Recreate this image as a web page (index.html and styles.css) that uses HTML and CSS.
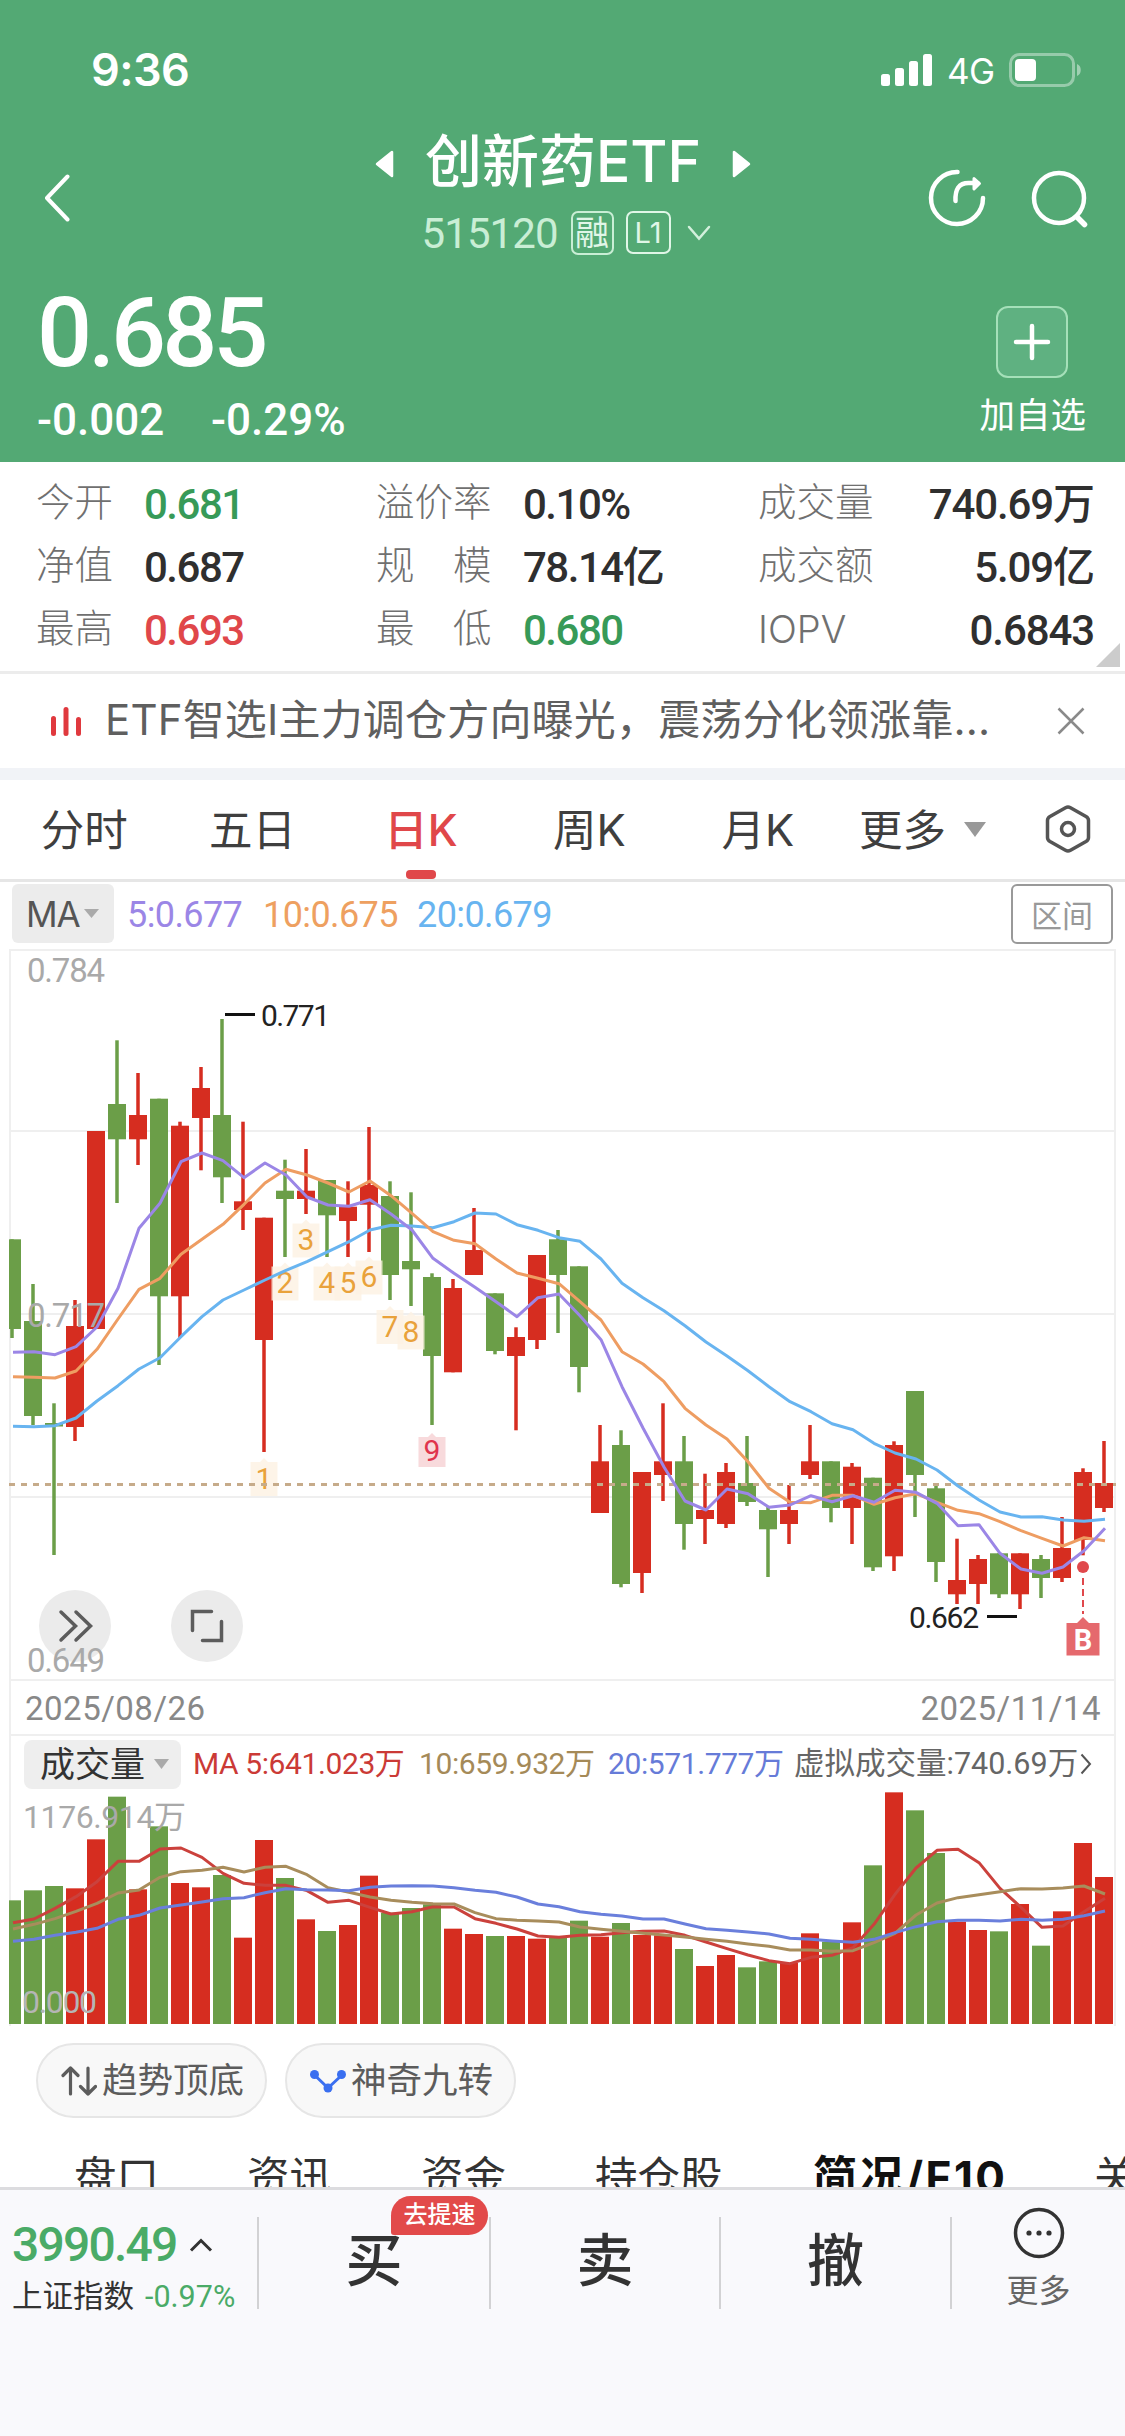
FILE: index.html
```html
<!DOCTYPE html>
<html lang="zh-CN">
<head>
<meta charset="utf-8">
<title>创新药ETF 515120</title>
<link rel="stylesheet" href="styles.css">
</head>
<body>
<div class="app">
  <header class="header">
    <div class="status">
      <span class="clock">9:36</span>
      <div class="status-right">
        <svg class="signal" width="52" height="34" viewBox="0 0 52 34" fill="#fff"><rect x="0" y="21" width="9" height="12" rx="2.5"/><rect x="14" y="15" width="9" height="18" rx="2.5"/><rect x="28" y="8" width="9" height="25" rx="2.5"/><rect x="42" y="1" width="9" height="32" rx="2.5"/></svg>
        <span class="net">4G</span>
        <svg width="74" height="34" viewBox="0 0 74 34"><rect x="1.5" y="1.5" width="63" height="31" rx="9" fill="none" stroke="#fff" stroke-opacity=".4" stroke-width="3"/><rect x="6" y="6" width="21" height="22" rx="4" fill="#fff"/><path d="M68 11c5 1.500 5 10.500 0 12z" fill="#fff" fill-opacity=".45"/></svg>
      </div>
    </div>
    <div class="nav">
      <svg class="back" width="26" height="48" viewBox="0 0 26 48"><path d="M23.500 2.500L3 24l20.500 21.500" fill="none" stroke="#fff" stroke-width="4" stroke-linecap="round" stroke-linejoin="round"/></svg>
      <div class="nav-title">
        <div class="name-row">
          <svg width="19" height="28" viewBox="0 0 19 28"><path d="M17 2v24L2 14z" fill="#fff" stroke="#fff" stroke-width="2.500" stroke-linejoin="round"/></svg>
          <h1>创新药ETF</h1>
          <svg width="19" height="28" viewBox="0 0 19 28"><path d="M2 2v24l15-12z" fill="#fff" stroke="#fff" stroke-width="2.500" stroke-linejoin="round"/></svg>
        </div>
        <div class="code-row">
          <span class="code num">515120</span>
          <span class="tag">融</span>
          <span class="tag tag-l1">L1</span>
          <svg class="code-arrow" width="24" height="16" viewBox="0 0 24 16"><path d="M2 2l10 11.500L22 2" fill="none" stroke="#d3f0dc" stroke-width="2.500" stroke-linecap="round"/></svg>
        </div>
      </div>
      <div class="nav-icons">
        <svg width="60" height="60" viewBox="0 0 60 60" fill="none" stroke="#fff" stroke-width="4.500" stroke-linecap="round" stroke-linejoin="round"><path d="M30.500 4A26 26 0 1 0 56 30"/><path d="M28.500 33c-.5-12 3.500-18 13-18h9"/><path d="M47 10.500l5.500 5L47 21z" fill="#fff" stroke-width="3"/></svg>
        <svg width="60" height="60" viewBox="0 0 60 60" fill="none" stroke="#fff" stroke-width="4.500" stroke-linecap="round"><circle cx="30" cy="30" r="25"/><path d="M48 49l7.500 7.500" stroke-width="5.500"/></svg>
      </div>
    </div>
    <div class="quote">
      <div class="quote-left">
        <div class="price num">0.685</div>
        <div class="change num"><span>-0.002</span><span>-0.29%</span></div>
      </div>
      <div class="watch">
        <div class="watch-box"><svg width="40" height="40" viewBox="0 0 40 40" stroke="#fff" stroke-width="4.500" stroke-linecap="round"><path d="M20 4v32M4 20h32"/></svg></div>
        <span>加自选</span>
      </div>
    </div>
  </header>

  <section class="stats">
    <span class="label">今开</span><span class="value num down">0.681</span>
    <span class="label">溢价率</span><span class="value num">0.10%</span>
    <span class="label">成交量</span><span class="value num end">740.69万</span>
    <span class="label">净值</span><span class="value num">0.687</span>
    <span class="label">规　模</span><span class="value num">78.14亿</span>
    <span class="label">成交额</span><span class="value num end">5.09亿</span>
    <span class="label">最高</span><span class="value num up">0.693</span>
    <span class="label">最　低</span><span class="value num down">0.680</span>
    <span class="label iopv">IOPV</span><span class="value num end">0.6843</span>
    <i class="corner"></i>
  </section>

  <section class="banner">
    <svg width="33" height="32" viewBox="0 0 33 32" fill="#e0393e"><rect x="1" y="11" width="5" height="20" rx="2.500"/><rect x="13.500" y="2" width="5" height="29" rx="2.500"/><rect x="26" y="12" width="5" height="19" rx="2.500"/></svg>
    <p>ETF智选I主力调仓方向曝光，震荡分化领涨靠...</p>
    <svg width="28" height="28" viewBox="0 0 28 28"><path d="M1.500 1.500l25 25M26.500 1.500l-25 25" stroke="#8a8a8a" stroke-width="2.500"/></svg>
  </section>

  <nav class="periods">
    <span class="period">分时</span>
    <span class="period">五日</span>
    <span class="period active">日K</span>
    <span class="period">周K</span>
    <span class="period">月K</span>
    <span class="period-more">更多<svg width="22" height="15" viewBox="0 0 22 15"><path d="M0 0h22L11 15z" fill="#999"/></svg></span>
    <svg class="gear" width="46" height="48" viewBox="0 0 46 48" fill="none" stroke="#555" stroke-width="3.500" stroke-linejoin="round"><path d="M20.500 2.700q2.500-1.400 5 0L41 11.500q2.500 1.500 2.500 4V32.500q0 2.500-2.500 4L25.500 45.300q-2.500 1.400-5 0L5 36.500q-2.500-1.500-2.500-4V15.500q0-2.500 2.500-4z"/><circle cx="23" cy="24" r="6.500"/></svg>
  </nav>

  <section class="ma-row">
    <span class="ma-pill">MA<svg width="15" height="9" viewBox="0 0 15 9"><path d="M0 0h15L7.500 9z" fill="#aaa"/></svg></span>
    <span class="num ma5">5:0.677</span>
    <span class="num ma10">10:0.675</span>
    <span class="num ma20">20:0.679</span>
    <span class="range">区间</span>
  </section>

  <section class="chart">
    <svg id="price" class="price-chart" viewBox="11 951 1103 728" width="1103" height="728"></svg>
    <div class="dates num"><span>2025/08/26</span><span>2025/11/14</span></div>
    <div class="vol-head">
      <span class="vol-pill">成交量<svg width="15" height="10" viewBox="0 0 15 10"><path d="M0 0h15L7.500 10z" fill="#aaa"/></svg></span>
      <span class="num v5">MA 5:641.023万</span>
      <span class="num v10">10:659.932万</span>
      <span class="num v20">20:571.777万</span>
      <span class="num virtual">虚拟成交量:740.69万</span>
      <svg width="12" height="22" viewBox="0 0 12 22"><path d="M1.500 1.500L10 11l-8.500 9.500" fill="none" stroke="#555" stroke-width="2"/></svg>
    </div>
    <svg id="volume" class="volume-chart" viewBox="11 1791 1103 233" width="1103" height="233"></svg>
  </section>

  <section class="chips">
    <span class="chip"><svg width="36" height="30" viewBox="0 0 36 30" fill="none" stroke="#5c5c5c" stroke-width="3.200" stroke-linecap="round" stroke-linejoin="round"><path d="M9.500 28V2M2 9.500L9.500 2l7.500 7.500"/><path d="M27 2v26M19.500 20.500L27 28l7.500-7.500"/></svg>趋势顶底</span>
    <span class="chip"><svg width="36" height="24" viewBox="0 0 36 24"><path d="M4.500 6L18 19 32 6" fill="none" stroke="#3a6ff0" stroke-width="3"/><g fill="#3a6ff0"><circle cx="4.500" cy="5.500" r="4.500"/><circle cx="18" cy="19" r="4.500"/><circle cx="31.500" cy="5.500" r="4.500"/></g></svg>神奇九转</span>
  </section>

  <nav class="sections">
    <span>盘口</span><span>资讯</span><span>资金</span><span>持仓股</span><span class="current">简况/F10</span><span>关</span>
  </nav>

  <footer class="footer">
    <div class="index">
      <div class="index-value"><span class="num">3990.49</span><svg width="24" height="14" viewBox="0 0 24 14"><path d="M2 12.500L12 2.500l10 10" fill="none" stroke="#333" stroke-width="3"/></svg></div>
      <div class="index-name"><span>上证指数</span><span class="num">-0.97%</span></div>
    </div>
    <div class="trade">买<b class="badge">去提速</b></div>
    <div class="trade">卖</div>
    <div class="trade">撤</div>
    <div class="more">
      <svg width="52" height="52" viewBox="0 0 52 52"><circle cx="26" cy="26" r="23.500" fill="none" stroke="#333" stroke-width="3.500"/><g fill="#333"><circle cx="16" cy="26" r="2.600"/><circle cx="26" cy="26" r="2.600"/><circle cx="36" cy="26" r="2.600"/></g></svg>
      <span>更多</span>
    </div>
  </footer>
</div>
<script src="chart.js"></script>
</body>
</html>
```
FILE: styles.css
```css
* { box-sizing: border-box; }
body { margin: 0; background: #fff; font-family: "Inter", "Noto Sans CJK SC", sans-serif; color: #333; }
.app { display: flex; flex-direction: column; width: 1125px; height: 2436px; overflow: hidden; white-space: nowrap; }
svg { display: block; flex: none; }
.num { font-family: "Roboto", "Noto Sans CJK SC", sans-serif; }

.header { height: 462px; background: #53a974; color: #fff; }
.status { display: flex; justify-content: space-between; align-items: center; height: 139px; padding: 0 42px 0 91px; }
.clock { font-size: 45px; font-weight: 600; letter-spacing: -.6px; }
.status-right { display: flex; align-items: center; }
.net { width: 62px; margin: 2px 0 0 14px; font-size: 35px; font-weight: 400; letter-spacing: -.5px; }
.nav { display: grid; grid-template-columns: 322px 482px 1fr; height: 118px; align-items: center; }
.back { margin-left: 44px; }
.nav-title { display: flex; flex-direction: column; align-items: center; gap: 23px; }
.name-row { display: flex; align-items: center; justify-content: center; gap: 31px; height: 46px; }
h1 { margin: -3px 0 0; font-size: 57px; font-weight: 500; line-height: 46px; }
.code-row { display: flex; align-items: center; height: 46px; padding-left: 6px; }
.code { font-size: 42px; letter-spacing: -.9px; color: #c9eed5; width: 149px; padding-top: 2px; }
.tag { display: flex; align-items: center; justify-content: center; width: 43px; height: 44px; border: 2px solid #c9eed5; border-radius: 7px; font-size: 34px; line-height: 40px; color: #e0f6e7; }
.tag-l1 { width: 45px; height: 43px; margin-left: 12px; font-size: 29px; border-color: #e0f6e7; }
.code-arrow { margin-left: 16px; }
.nav-icons { display: flex; gap: 42px; padding-left: 123px; }
.quote { display: flex; justify-content: space-between; padding: 0 39px 0 37px; }
.price { margin-top: 26px; font-size: 97px; font-weight: 500; line-height: 100px; letter-spacing: -4px; }
.change { display: flex; margin-top: 7px; font-size: 44px; line-height: 60px; font-weight: 500; letter-spacing: 0; }
.change span { width: 174px; }
.watch { display: flex; flex-direction: column; align-items: center; padding-top: 49px; font-size: 35.500px; line-height: 44px; }
.watch-box { display: flex; align-items: center; justify-content: center; width: 72px; height: 72px; margin: 0 0 16px -1px; border: 2px solid #a5e0b9; border-radius: 12px; background: #5fb181; }

.stats { position: relative; display: grid; grid-template-columns: 108px 232px 147px 235px 110px 1fr; grid-auto-rows: 63px; align-items: center; height: 212px; padding: 10px 31px 0 36px; border-bottom: 3px solid #ececec; }
.label { font-size: 38.500px; line-height: 50px; padding-bottom: 4px; font-weight: 300; color: #707070; }
.iopv { font-size: 38px; padding-bottom: 2px; }
.value { padding-top: 3px; font-size: 42px; line-height: 50px; font-weight: 500; letter-spacing: -1.500px; color: #2f2f2f; }
.end { justify-self: end; letter-spacing: -1.100px; }
.down { color: #379a58; }
.up { color: #e0474a; }
.corner { position: absolute; right: 5px; bottom: 4px; border-left: 24px solid transparent; border-bottom: 24px solid #ccc; }

.banner { display: flex; align-items: center; height: 106px; padding: 0 40px 0 50px; border-bottom: 12px solid #f1f3f7; }
.banner p { margin: 0 0 2px 22px; width: 952px; font-size: 42px; line-height: 60px; letter-spacing: .18px; color: #5f5f5f; }

.periods { display: flex; align-items: center; height: 102px; border-bottom: 3px solid #e6e6e6; font-size: 43.500px; color: #3f3f3f; }
.period { position: relative; width: 168.400px; line-height: 98px; text-align: center; }
.active { color: #e0474a; font-weight: 500; }
.active::after { content: ""; position: absolute; left: 69px; bottom: 0; width: 30px; height: 9px; border-radius: 4px; background: #e0474a; }
.period-more { display: flex; align-items: center; gap: 18px; width: 203px; padding-left: 17px; line-height: 98px; }
.gear { margin-top: -2px; }

.ma-row { display: flex; align-items: center; height: 67px; padding: 0 12px 4px; font-size: 36px; }
.ma-row .num { padding-top: 2px; letter-spacing: -.6px; font-size: 36px; }
.ma-pill { display: flex; align-items: center; gap: 4px; width: 102px; height: 59px; padding-left: 14px; border-radius: 6px; background: #ececec; color: #555; font-size: 35px; letter-spacing: -1px; margin-right: 13px; }
.ma5 { width: 136px; color: #9b86e6; }
.ma10 { width: 154px; color: #eea060; }
.ma20 { color: #68b4f0; }
.range { display: flex; align-items: center; justify-content: center; width: 102px; height: 60px; margin-left: auto; border: 2px solid #999; border-radius: 6px; font-size: 31px; color: #999; }

.chart { height: 1077px; margin: 0 9px; border: 2px solid #efefef; border-bottom: 0; }
.price-chart, .volume-chart { overflow: visible; }
svg text { font-family: "Roboto", "Noto Sans CJK SC", sans-serif; }
.dates { display: flex; justify-content: space-between; height: 57px; padding: 2px 13px 0 14px; line-height: 52px; border: solid #efefef; border-width: 2px 0; font-size: 33px; color: #888; letter-spacing: .5px; }
.vol-head { display: flex; align-items: center; height: 55px; line-height: 44px; font-size: 30px; }
.vol-pill { display: flex; align-items: center; gap: 9px; width: 157px; height: 49px; margin: 1px 12px 0 13px; padding-left: 16px; border-radius: 8px; background: #eee; font-size: 35px; line-height: 45px; }
.v5 { width: 226px; color: #cb3a36; }
.v10 { width: 189px; color: #a58a58; }
.v20 { width: 186px; color: #667bd8; }
.vol-head .v5, .vol-head .v10, .vol-head .v20 { letter-spacing: -.4px; font-size: 30px; font-weight: 400; }
.virtual { width: 286px; font-size: 30.500px; letter-spacing: 0; color: #666; }

.chips { display: flex; gap: 18px; height: 102px; padding: 17px 36px 0; }
.chip { display: flex; align-items: center; gap: 5px; width: 231px; height: 75px; padding-left: 23px; border: 2px solid #e6e6e6; border-radius: 38px; background: #f8f8f8; font-size: 35.500px; line-height: 68px; color: #5c5c5c; }
.sections { display: grid; grid-template-columns: 173px 174px 174px 218px 281px auto; height: 59px; padding-left: 74px; overflow: hidden; font-size: 42.500px; line-height: 98px; }
.current { font-weight: 700; font-size: 44px; letter-spacing: 2.500px; color: #111; }

.footer { display: grid; grid-template-columns: 257px 232px 230px 231px 175px; align-content: start; height: 249px; padding-top: 27px; border-top: 3px solid #dcdcdf; background: #f9f9fc; }
.footer > div { height: 92px; }
.index { display: flex; flex-direction: column; padding-left: 12px; }
.index-value { display: flex; align-items: center; gap: 13px; height: 55px; color: #4aab67; font-size: 48px; font-weight: 500; letter-spacing: -1.800px; }
.index-name { display: flex; align-items: center; gap: 11px; height: 54px; font-size: 30.500px; line-height: 46px; }
.index-name .num { color: #4aab67; letter-spacing: 0; padding-top: 2px; }
.trade { position: relative; border-left: 2px solid #d2d2d4; line-height: 88px; text-align: center; font-size: 57px; font-weight: 500; }
.badge { position: absolute; left: 132px; top: -21px; width: 97px; height: 39px; border-radius: 20px 20px 20px 3px; background: #e24a4a; color: #fff; font-size: 24px; font-weight: 500; line-height: 38px; }
.more { display: flex; flex-direction: column; align-items: center; border-left: 2px solid #d2d2d4; font-size: 32px; line-height: 40px; color: #666; }
.more svg { margin: -10px 0 12px; }
```
FILE: chart.js
```javascript
const RED = '#d62d20', GREEN = '#6b9e48';
const cx = i => 12 + 21 * i;
const scale = 3;

// direction, high, body top, body bottom, low
const candles = [
  ['g',1239.300,1239.300,1329,1338],['g',1284,1321,1416,1425],['g',1403.300,1423,1426.500,1555],['r',1300,1326,1427,1441],
  ['r',1131,1131,1329,1329],['g',1040.300,1104,1139.300,1203],['r',1073,1115,1139.300,1165],['g',1098.700,1098.700,1296.300,1365],
  ['r',1121.700,1125.700,1296.300,1338],['r',1067,1088,1118,1170.300],['g',1019,1115,1177.300,1203],['r',1121.700,1201.300,1210,1230],
  ['r',1217.700,1217.700,1340,1452],['g',1159.700,1190.700,1199,1257],['r',1149,1190.700,1199,1214],['g',1180,1180,1215.300,1257],
  ['r',1181.300,1206.700,1221,1257],['r',1127,1185,1204.700,1252],['g',1181.300,1196,1275,1300],['g',1192.300,1261,1269.300,1306],
  ['g',1273.300,1277,1356,1425],['r',1279,1288,1372.300,1372.300],['r',1208,1250,1275,1275],['g',1293.300,1293.300,1351,1354.300],
  ['r',1327.300,1337,1356,1430.300],['r',1255,1255,1340,1349],['g',1230,1239.300,1275,1333],['g',1266.300,1266.300,1367,1392.300],
  ['r',1425,1461.300,1513,1513],['g',1430.300,1445,1584,1587.300],['r',1472,1472,1573,1593],['r',1403.300,1461.300,1475,1501],
  ['g',1436,1461.300,1524,1549.700],['r',1473.700,1510,1519,1544],['r',1463,1472,1524,1528],['g',1436,1483,1502,1506],
  ['g',1506.700,1510,1529.300,1577],['r',1485,1510,1524,1544],['r',1425,1461.300,1475,1479],['g',1461.300,1461.300,1508,1522.300],
  ['r',1463,1466.700,1508,1544],['g',1477.700,1477.700,1567.300,1571],['r',1441.300,1445,1556.300,1571],['g',1391,1391,1475,1517],
  ['g',1485,1488.300,1562,1582],['r',1538.700,1580,1594.300,1604],['r',1555,1559,1584,1604],['g',1553.300,1553.300,1594.300,1598],
  ['r',1553.300,1553.300,1594.300,1609],['g',1555,1559,1578,1598],['r',1517,1548,1578,1582],['r',1468.300,1472,1540,1555.300],
  ['r',1441,1483,1508,1512]
];
const ma5 = [1352.300,1351.700,1354.700,1346.700,1327,1288.300,1228.300,1203.300,1161.700,1153,1160.700,1177.700,1163,1175,1197,1205,1206.300,1199.700,1214,1230,1258.300,1273.300,1287.300,1301.700,1316.700,1297.700,1294,1315.700,1339.700,1386.700,1428,1467,1501,1510,1489,1493.700,1507.300,1505,1495.700,1501.700,1495.700,1502.300,1490.300,1492.300,1503.300,1525.700,1524.700,1553.300,1569,1573.300,1567,1550.700,1528.300];
const ma10 = [1376.700,1377.300,1378,1371,1349.300,1319,1289.300,1278.300,1254.300,1239.300,1224.300,1204.300,1183,1169.300,1175,1183,1192,1181,1195.700,1213.300,1231.700,1240.300,1243.700,1259,1273,1278.300,1283.700,1301.700,1320,1351.700,1364,1381.700,1408.300,1425,1439,1461.700,1488.300,1502.300,1502.700,1495.300,1495.300,1504.300,1497.700,1493.700,1502.300,1510.300,1513.700,1521.700,1530.700,1538.300,1546,1537.700,1540.700];
const ma20 = [1426.300,1426.700,1425.700,1418,1401,1385.700,1369,1357.700,1336.700,1316.700,1300,1290,1280,1270.300,1261.700,1251.700,1241.700,1230,1225.300,1226,1227.700,1221.700,1213,1214,1224.700,1230.300,1237.700,1241.300,1259,1283.300,1297.700,1310.700,1325.700,1342,1356,1370.700,1386.700,1401.700,1411.700,1423.700,1429.700,1443.300,1453,1459,1470,1486,1500,1512,1517,1516.700,1520,1521.300,1519.300];

const line = (pts, color, w) =>
  `<polyline fill="none" stroke="${color}" stroke-width="${w}" stroke-linejoin="round" points="${pts.map((y, i) => `${cx(i) + 1},${y}`).join(' ')}"/>`;
const label = (x, y, w, size, color, text, extra = '') =>
  `<text x="${x}" y="${y}" font-size="${size}" fill="${color}" textLength="${w}" ${extra}>${text}</text>`;
const body = (i, top, bottom, fill) => {
  const left = Math.max(9, cx(i) - 9);
  return `<rect x="${left}" y="${top}" width="${cx(i) + 9 - left}" height="${bottom - top}" fill="${fill}"/>`;
};

let p = '';
for (const y of [1131, 1314, 1497]) p += `<rect x="11" y="${y - 1}" width="1103" height="2" fill="#efefef"/>`;
candles.forEach(([dir, high, top, bottom, low], i) => {
  const fill = dir === 'r' ? RED : GREEN;
  p += `<rect x="${cx(i) - 1.750}" y="${high}" width="3.500" height="${low - high}" fill="${fill}"/>` + body(i, top, bottom, fill);
});

// nine-turn counters: digit, centre x, centre y
[[1,264,1478],[2,285,1282.500],[3,306,1239.500],[4,327,1282.500],[5,348,1282.500],[6,369,1276.500],[7,390,1326],[8,411,1331.500]].forEach(([n, x, y]) => {
  p += `<path d="M${x - 13.500} ${y - 16}h9.500l4-4 4 4h9.500v34h-27z" fill="#fdf1e2" fill-opacity=".8"/><text x="${x}" y="${y + 10.500}" font-size="30" fill="#e9a23b" text-anchor="middle">${n}</text>`;
});
p += `<path d="M418.500 1437h9.500l4-4 4 4h9.500v30h-27z" fill="#f8dadc"/><text x="432" y="1461" font-size="30" fill="#e0344c" text-anchor="middle">9</text>`;
p += `<path d="M9 1484.500H1116" stroke="#c6ab8a" stroke-width="3" stroke-dasharray="6 6"/>`;
p += line(ma20, '#68b4f0', 3) + line(ma10, '#ee9d62', 3) + line(ma5, '#9b86e6', 3);

p += `<path d="M225 1014.500h30M987 1616.500h30" stroke="#111" stroke-width="3"/>`;
p += label(261, 1026, 69, 30, '#222', '0.771') + label(909, 1628, 70, 30, '#222', '0.662');
p += `<circle cx="1083" cy="1567" r="6" fill="#e0484c"/><path d="M1083 1578v36" stroke="#e0484c" stroke-width="2" stroke-dasharray="7 4"/>
<path d="M1066.500 1623h10.500l6-6 6 6h10.500v32.500h-33z" fill="#e5696d"/><text x="1083" y="1650" font-size="29" font-weight="700" fill="#fff" text-anchor="middle">B</text>`;
p += `<g fill="#ebebeb"><circle cx="75" cy="1626" r="36"/><circle cx="207" cy="1626" r="36"/></g>
<g fill="none" stroke="#5c5c5c" stroke-width="3.500" stroke-linecap="round"><path d="M61 1612l14.500 14-14.500 14M76 1612l14.500 14-14.500 14M192.500 1630.500v-19h19M221.500 1621.500v19h-19"/></g>`;
p += label(27, 982, 78, 33, '#a9a9a9', '0.784') + label(27, 1327, 78, 33, '#a9a9a9', '0.717') + label(27, 1672, 78, 33, '#a9a9a9', '0.649');
document.getElementById('price').innerHTML = p;

// volume values are measured down from the top of the panel, in thirds of a pixel
const vy = v => 1720 + v / scale;
const vol = [541,511,498,505,358,230,508,319,489,502,465,653,360,474,598,633,615,467,578,564,553,626,642,648,648,656,652,602,650,609,645,646,687,738,705,742,724,729,640,665,607,436,217,271,399,605,630,634,552,677,574,369,471];
const volDir = 'gggrrgrgrrgrrgrgrrgggrrgrrggrgrrgrrggrrgrgrggrrgrgrrr';
const v5 = [608,597,565,530,485,424,424,387,384,412,460,490,496,496,512,547,541,562,582,575,560,561,596,610,627,648,652,646,644,638,634,633,646,666,686,705,722,731,712,706,683,613,523,444,391,388,428,505,562,622,618,575,535];
const v10 = [627,613,596,574,550,519,510,472,455,451,442,456,442,439,464,503,517,531,541,547,551,552,578,596,601,603,606,621,628,634,640,645,651,658,664,672,679,690,690,694,692,668,640,585,549,533,524,515,506,507,504,498,522];
const v20 = [664,658,646,637,625,598,586,564,555,546,536,533,518,506,509,510,512,502,498,497,498,503,511,517,531,552,560,575,583,588,597,597,612,626,631,636,642,655,658,663,667,658,638,620,605,601,601,603,598,601,598,587,573];
let v = '';
vol.forEach((t, i) => { v += body(i, vy(t), 2024, volDir[i] === 'r' ? RED : GREEN); });
v += line(v5.map(vy), '#cb413c', 3) + line(v10.map(vy), '#a88d5c', 3) + line(v20.map(vy), '#6a7fdc', 3);
v += label(23, 1828, 163, 32, '#a9a9a9', '1176.914万') + label(22, 2013, 75, 32, '#b5b5b5', '0.000');
document.getElementById('volume').innerHTML = v;
```
